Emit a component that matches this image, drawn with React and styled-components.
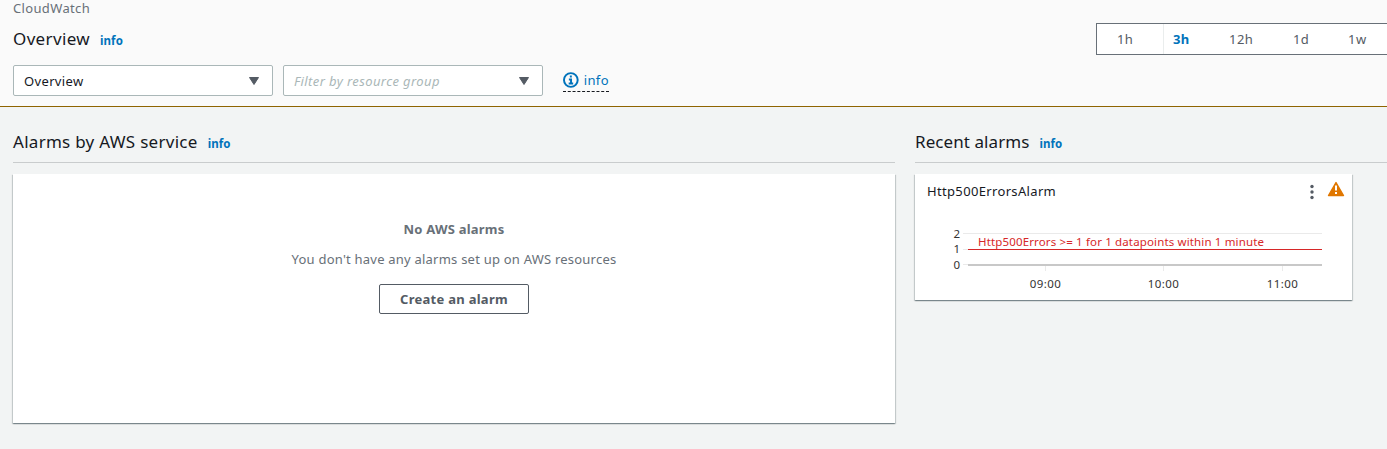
import React from "react";
import styled, { createGlobalStyle } from "styled-components";

const Global = createGlobalStyle`
  * { box-sizing: border-box; }
  html, body { margin: 0; height: 449px; overflow: hidden; background: #f2f4f4; }
  body { font-family: "Noto Sans", "Open Sans", sans-serif; font-size: 13px; color: #16191f; }
`;

const Page = styled.div`
  height: 449px;
  overflow: hidden;
`;

const Header = styled.header`
  height: 107px;
  padding-left: 13px;
  background: #fafafa;
  border-bottom: 1px solid #8f6400;
  display: flex;
  justify-content: space-between;
  align-items: flex-start;
`;

const HeaderLeft = styled.div`
  display: flex;
  flex-direction: column;
`;

const Label = styled.span`
  display: block;
  white-space: nowrap;
  font-size: ${(p) => p.$size || 13}px;
  line-height: ${(p) => p.$lh || 20}px;
  font-weight: ${(p) => p.$weight || 400};
  letter-spacing: ${(p) => p.$ls || 0}px;
  color: ${(p) => p.$color || "#16191f"};
  font-style: ${(p) => (p.$italic ? "italic" : "normal")};
`;

const Crumb = styled(Label)`
  margin-top: -2px;
`;

const TitleRow = styled.div`
  display: flex;
  align-items: baseline;
  gap: 10px;
  height: 24px;
  margin-top: ${(p) => p.$top || 0}px;
`;

const InfoLink = styled.a`
  font-size: 11.5px;
  line-height: 16px;
  font-weight: 700;
  letter-spacing: 0.1px;
  color: #0073bb;
`;

const Controls = styled.div`
  display: flex;
  margin-top: 14px;
`;

const Select = styled.div`
  width: 260px;
  height: 31px;
  margin-right: 10px;
  padding: 0 12px 0 10px;
  display: flex;
  align-items: center;
  justify-content: space-between;
  background: #fff;
  border: 1px solid #aab7b8;
  border-radius: 2px;
`;

const HelpLink = styled.a`
  display: flex;
  align-items: center;
  gap: 5px;
  width: 46px;
  height: 22px;
  margin: 5px 0 0 10px;
  padding-bottom: 1px;
  border-bottom: 1px dashed #16191f;
`;

const Ranges = styled.div`
  display: flex;
  width: 291px;
  height: 32px;
  margin-top: 23px;
  background: #fff;
  border: 1px solid #687078;
  border-right: 0;
  overflow: hidden;
`;

const Range = styled.div`
  flex: 0 0 ${(p) => p.$w}px;
  padding-left: ${(p) => p.$pad}px;
  display: flex;
  align-items: center;
  border-right: ${(p) => (p.$divider ? "1px solid #eaeded" : "0")};
`;

const Main = styled.main`
  display: grid;
  grid-template-columns: 882px 472px;
  column-gap: 20px;
  padding: 23px 0 0 13px;
`;

const Section = styled.section`
  display: flex;
  flex-direction: column;
`;

const SectionHead = styled.div`
  display: flex;
  align-items: baseline;
  gap: 10px;
  height: 33px;
  margin-bottom: 11px;
  border-bottom: 1px solid #c9cccd;
`;

const Card = styled.div`
  width: ${(p) => p.$w}px;
  height: ${(p) => p.$h}px;
  background: #fff;
  box-shadow: 0 1px 1px 0 rgba(0, 28, 36, 0.3), 1px 1px 1px 0 rgba(0, 28, 36, 0.15),
    -1px 1px 1px 0 rgba(0, 28, 36, 0.15);
`;

const EmptyCard = styled(Card)`
  display: flex;
  flex-direction: column;
  align-items: center;
  padding-top: 45px;
`;

const Button = styled.button`
  width: 150px;
  height: 30px;
  margin-top: 15px;
  padding: 0;
  display: flex;
  justify-content: center;
  align-items: center;
  font-family: inherit;
  background: #fff;
  border: 1px solid #545b64;
  border-radius: 2px;
`;

const Message = styled(Label)`
  margin-top: 10px;
`;

const AlarmHead = styled.div`
  display: flex;
  align-items: flex-start;
  justify-content: space-between;
  height: 46px;
  padding: 7px 7px 0 12px;
`;

const AlarmIcons = styled.div`
  display: flex;
  gap: 13px;
`;

const KebabSvg = styled.svg`
  margin-top: 3px;
`;

const Caret = () => (
  <svg width="12" height="10" viewBox="0 0 12 10">
    <path d="M1.5 1.5h9L6 8.5z" fill="#545b64" stroke="#545b64" strokeLinejoin="round" />
  </svg>
);

const InfoIcon = () => (
  <svg width="16" height="16" viewBox="0 0 16 16" fill="none" stroke="#0073bb" strokeWidth="2">
    <circle cx="8" cy="8" r="7" />
    <path d="M5.8 11.5h4.6M6 7.5h2.2v4M7 4.5h2" />
  </svg>
);

const Kebab = () => (
  <KebabSvg width="4" height="16" viewBox="0 0 4 16" fill="#545b64">
    <circle cx="2" cy="2.5" r="1.7" />
    <circle cx="2" cy="8" r="1.7" />
    <circle cx="2" cy="13.5" r="1.7" />
  </KebabSvg>
);

const Warning = () => (
  <svg width="18" height="16" viewBox="0 0 18 16">
    <path d="M9 1.5L16.5 14.5H1.5z" fill="#e07700" stroke="#e07700" strokeWidth="1.4" strokeLinejoin="round" />
    <path d="M9 4.5v5M9 11v2" stroke="#fff" strokeWidth="2" />
  </svg>
);

const ChartSvg = styled.svg`
  display: block;
  font-family: "Noto Sans", "Open Sans", sans-serif;
  font-size: 12px;
`;

const ticks = [
  { x: 130.5, text: "09:00" },
  { x: 248.5, text: "10:00" },
  { x: 367.5, text: "11:00" },
];

const Chart = () => (
  <ChartSvg width="437" height="80" viewBox="0 0 437 80">
    <path d="M48 13.5H407M48 29.5H53M48 44.5H53" stroke="#eaeaea" />
    <path d="M53 45H407" stroke="#c8c8c8" strokeWidth="2" />
    <path d="M53 29.5H407" stroke="#d62728" />
    {[["2", 18], ["1", 33], ["0", 49]].map(([t, y]) => (
      <text key={t} x="45" y={y} textAnchor="end" fill="#333" fontSize="11.5">{t}</text>
    ))}
    {ticks.map((t) => (
      <g key={t.text}>
        <path d={`M${t.x} 46v5`} stroke="#eaeaea" />
        <text x={t.x} y="68" textAnchor="middle" fill="#333" fontSize="11.5" letterSpacing="0.4">{t.text}</text>
      </g>
    ))}
    <text x="63" y="26" fill="#d62728" fontSize="11.5" textLength="286">
      Http500Errors &gt;= 1 for 1 datapoints within 1 minute
    </text>
  </ChartSvg>
);

export default function App() {
  return (
    <Page>
      <Global />
      <Header>
        <HeaderLeft>
          <Crumb $color="#687078" $ls={0.35}>CloudWatch</Crumb>
          <TitleRow $top={9}>
            <Label $size={17} $lh={24} $ls={0.35}>Overview</Label>
            <InfoLink>info</InfoLink>
          </TitleRow>
          <Controls>
            <Select>
              <Label $ls={0.35}>Overview</Label>
              <Caret />
            </Select>
            <Select>
              <Label $italic $color="#aab7b8" $ls={0.4}>Filter by resource group</Label>
              <Caret />
            </Select>
            <HelpLink>
              <InfoIcon />
              <Label $color="#0073bb" $ls={0.4}>info</Label>
            </HelpLink>
          </Controls>
        </HeaderLeft>
        <Ranges>
          <Range $w={67} $pad={20} $divider><Label $color="#545b64" $ls={0.3}>1h</Label></Range>
          <Range $w={55} $pad={9}><Label $weight={700} $color="#0073bb" $ls={0.3}>3h</Label></Range>
          <Range $w={64} $pad={10}><Label $color="#545b64" $ls={0.5}>12h</Label></Range>
          <Range $w={56} $pad={10}><Label $color="#545b64" $ls={0.3}>1d</Label></Range>
          <Range $w={48} $pad={9}><Label $color="#545b64" $ls={0.5}>1w</Label></Range>
        </Ranges>
      </Header>
      <Main>
        <Section>
          <SectionHead>
            <Label $size={17} $lh={24} $ls={0.28}>Alarms by AWS service</Label>
            <InfoLink>info</InfoLink>
          </SectionHead>
          <EmptyCard $w={882} $h={249}>
            <Label $weight={700} $color="#687078" $ls={0.22}>No AWS alarms</Label>
            <Message $color="#687078" $ls={0.22}>You don't have any alarms set up on AWS resources</Message>
            <Button>
              <Label $weight={700} $color="#545b64" $ls={0.28}>Create an alarm</Label>
            </Button>
          </EmptyCard>
        </Section>
        <Section>
          <SectionHead>
            <Label $size={17} $lh={24} $ls={0.07}>Recent alarms</Label>
            <InfoLink>info</InfoLink>
          </SectionHead>
          <Card $w={437} $h={126}>
            <AlarmHead>
              <Label $ls={0.34}>Http500ErrorsAlarm</Label>
              <AlarmIcons>
                <Kebab />
                <Warning />
              </AlarmIcons>
            </AlarmHead>
            <Chart />
          </Card>
        </Section>
      </Main>
    </Page>
  );
}
